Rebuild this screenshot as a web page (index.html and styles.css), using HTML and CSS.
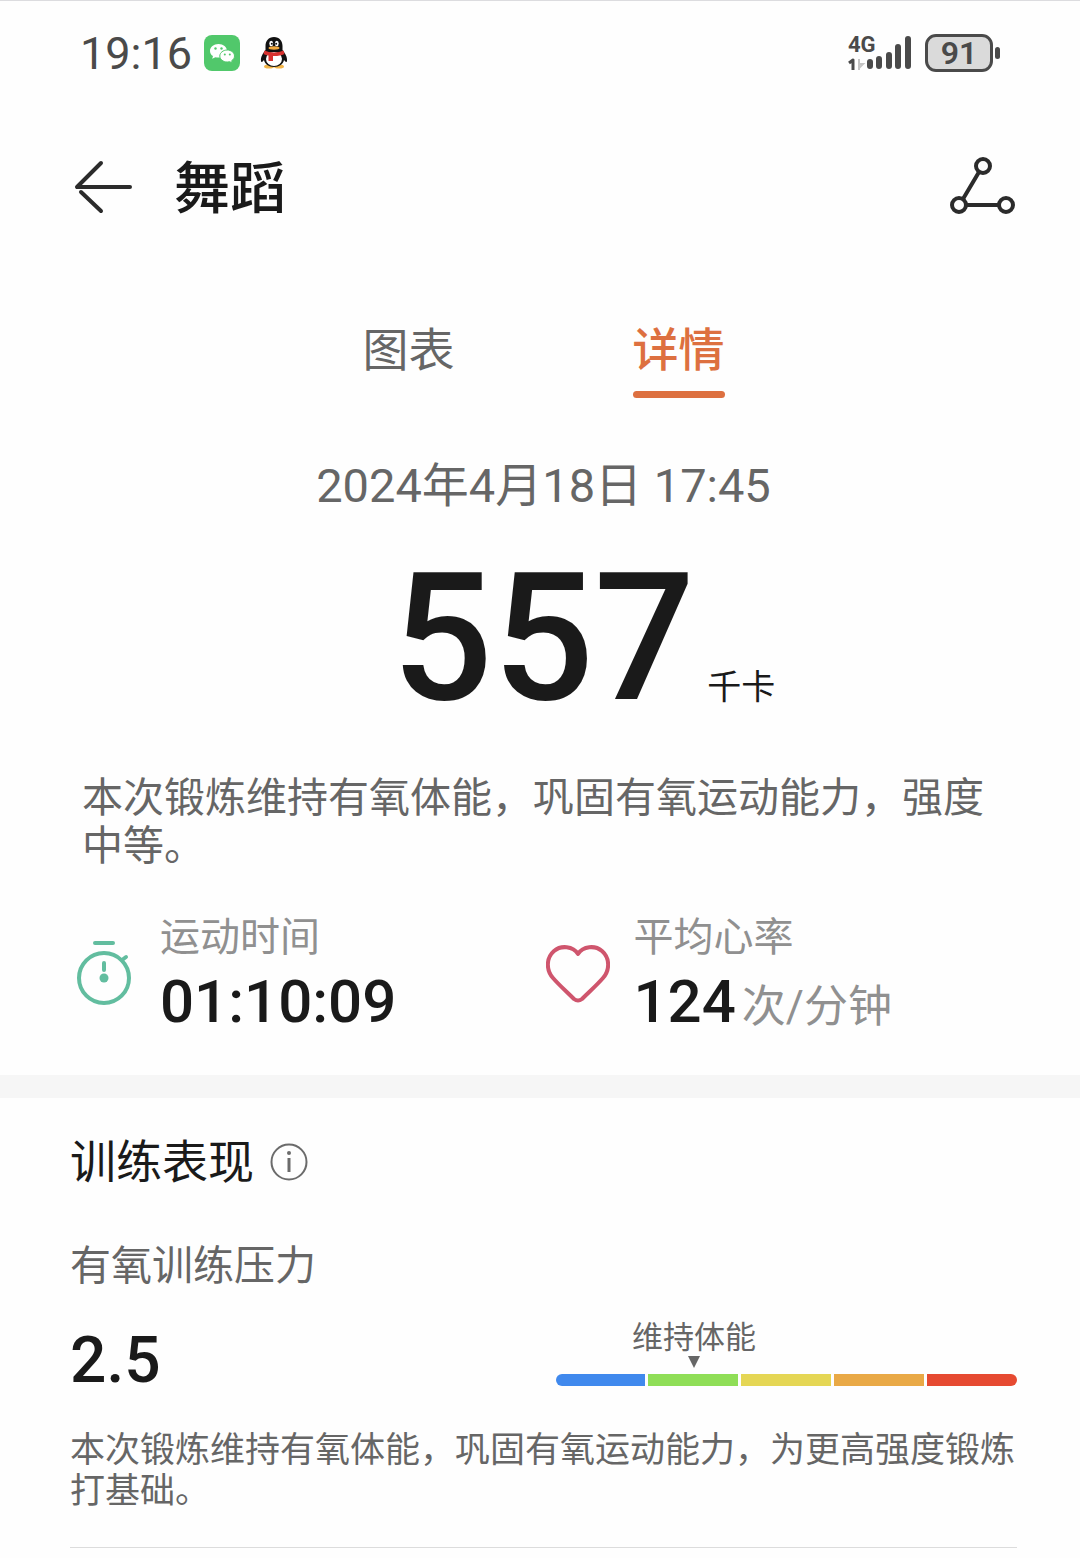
FILE: index.html
```
<!DOCTYPE html>
<html lang="zh-CN">
<head>
	<meta charset="utf-8">
	<meta name="viewport" content="width=device-width, initial-scale=1">
	<title>舞蹈</title>
	<link rel="stylesheet" href="styles.css">
</head>
<body>
	<div class="statusbar">
		<span class="clock">19:16</span>
		<svg class="app-icon" width="36" height="36" viewBox="0 0 36 36" aria-hidden="true">
			<rect width="36" height="36" rx="8" fill="#51c86b"/>
			<path d="M14.500 9c-4.800 0-8.500 3-8.500 6.900 0 2.200 1.200 4 3 5.200l-.8 2.700 3.200-1.600c1 .3 2 .4 3.100.4 4.800 0 8.500-3 8.500-6.800S19.300 9 14.500 9z" fill="#fff"/>
			<path d="M23.200 15c-4 0-7.400 2.700-7.400 6s3.300 6 7.400 6c.9 0 1.700-.1 2.500-.3l2.600 1.300-.6-2.300c1.700-1.100 2.800-2.800 2.800-4.700 0-3.300-3.300-6-7.300-6z" fill="#fff" stroke="#51c86b" stroke-width="1"/>
			<g fill="#51c86b"><circle cx="11.500" cy="13.500" r="1.200"/><circle cx="17.500" cy="13.500" r="1.200"/><circle cx="20.800" cy="19.500" r="1"/><circle cx="25.800" cy="19.500" r="1"/></g>
		</svg>
		<svg class="app-icon penguin" width="28" height="32" viewBox="0 0 28 32" aria-hidden="true">
			<ellipse cx="9" cy="29.500" rx="5" ry="2" fill="#f3b548"/>
			<ellipse cx="19" cy="29.500" rx="5" ry="2" fill="#f3b548"/>
			<path d="M14 0C8.500 0 5.500 4 5.500 9v4C3 16 .5 20 1 24c.2 1.700 1.500 1 3-1 .8 4 4.500 7 10 7s9.200-3 10-7c1.500 2 2.800 2.700 3 1 .5-4-2-8-4.500-11V9c0-5-3-9-8.500-9z" fill="#111"/>
			<ellipse cx="14" cy="22" rx="8" ry="7" fill="#fff"/>
			<ellipse cx="11.200" cy="6.500" rx="1.900" ry="2.700" fill="#fff"/>
			<ellipse cx="16.800" cy="6.500" rx="1.900" ry="2.700" fill="#fff"/>
			<circle cx="11.800" cy="6.800" r="1" fill="#111"/><circle cx="16.200" cy="6.800" r="1" fill="#111"/>
			<ellipse cx="14" cy="11" rx="5.500" ry="1.700" fill="#f3a93c"/>
			<path d="M4.500 13.500c5 2.600 14 2.600 19 0l1 3.500c-3.500 1.600-7.500 2.200-11.500 2v5H8.500v-5.500c-1.700-.3-3.500-.8-5-1.500z" fill="#d8322f"/>
		</svg>
		<svg class="signal" width="66" height="54" viewBox="-1 -8 66 54" role="img" aria-label="4G">
			<text class="signal-text" x="0" y="18">4G</text>
			<path d="M1 29l4-3v10" fill="none" stroke="#4a4a4a" stroke-width="3" stroke-linejoin="round"/>
			<path d="M11 25v11M11 34l4-4h-4" fill="none" stroke="#c4c4c4" stroke-width="2"/>
			<g stroke="#4a4a4a" stroke-width="6" stroke-linecap="round">
				<path d="M22 28v4M31 25v7M41 21v11M50 13v19M60 5v27"/>
			</g>
		</svg>
		<span class="battery">91</span>
	</div>

	<header class="appbar">
		<button class="icon-button" type="button" aria-label="返回">
			<svg width="60" height="54" viewBox="0 0 60 54" fill="none" stroke="#2b2b2b" stroke-width="4" stroke-linecap="round" stroke-linejoin="round">
				<path d="M29 3L5 27H58M9 32l20 19"/>
			</svg>
		</button>
		<h1 class="title">舞蹈</h1>
		<button class="icon-button share" type="button" aria-label="分享">
			<svg width="68" height="60" viewBox="0 0 68 60" fill="none" stroke="#2b2b2b" stroke-width="4">
				<circle cx="34" cy="9" r="7"/><circle cx="10" cy="48" r="7"/><circle cx="57" cy="48" r="7"/>
				<path d="M30 15L14 42M17 48h33"/>
			</svg>
		</button>
	</header>

	<main>
		<section class="summary">
			<nav class="tabs">
				<a class="tab" href="#chart">图表</a>
				<a class="tab active" href="#detail" aria-current="page">详情</a>
			</nav>
			<p class="date">2024年4月18日 17:45</p>
			<p class="energy"><span class="energy-value">557</span><span class="energy-unit">千卡</span></p>
			<p class="comment">本次锻炼维持有氧体能，巩固有氧运动能力，强度中等。</p>
			<div class="stats">
				<div class="stat">
					<svg class="stat-icon" width="64" height="66" viewBox="0 0 64 66" fill="none" stroke="#62bd9f" stroke-width="4" stroke-linecap="round" aria-hidden="true">
						<circle cx="32" cy="38" r="25"/>
						<path d="M23 3h18M50 20l4-3M32 23v7"/>
						<circle cx="32" cy="38" r="4.500" fill="#62bd9f" stroke="none"/>
					</svg>
					<div>
						<p class="stat-label">运动时间</p>
						<p class="stat-value">01:10:09</p>
					</div>
				</div>
				<div class="stat">
					<svg class="stat-icon" width="64" height="66" viewBox="0 0 64 66" fill="none" stroke="#cf556d" stroke-width="4" stroke-linejoin="round" aria-hidden="true">
						<path d="M32 14C27 6 15 5 8 11C0 18 0 30 7 38C13 45 21 52 28 59Q32 62 36 59C43 52 51 45 57 38C64 30 64 18 56 11C49 5 37 6 32 14z"/>
					</svg>
					<div>
						<p class="stat-label">平均心率</p>
						<p class="stat-value">124<span class="stat-unit">次/分钟</span></p>
					</div>
				</div>
			</div>
		</section>

		<section class="training">
			<div class="section-head">
				<h2 class="section-title">训练表现</h2>
				<button class="icon-button" type="button" aria-label="说明">
					<svg width="38" height="38" viewBox="0 0 38 38" fill="none" stroke="#6b6b6b" stroke-width="2">
						<circle cx="19" cy="19" r="17.500"/>
						<path d="M19 15v14" stroke-width="3"/>
						<circle cx="19" cy="10" r="2" fill="#6b6b6b" stroke="none"/>
					</svg>
				</button>
			</div>
			<h3 class="metric-name">有氧训练压力</h3>
			<div class="metric">
				<span class="metric-value">2.5</span>
				<div class="gauge">
					<!-- twice as wide as the marker position, the marker is centred in it -->
					<div class="marker" style="width: 60%">
						<span>维持体能</span>
						<i class="arrow"></i>
					</div>
					<div class="scale">
						<i class="level blue"></i>
						<i class="level green"></i>
						<i class="level yellow"></i>
						<i class="level orange"></i>
						<i class="level red"></i>
					</div>
				</div>
			</div>
			<p class="advice">本次锻炼维持有氧体能，巩固有氧运动能力，为更高强度锻炼打基础。</p>
		</section>
	</main>
</body>
</html>
```
FILE: styles.css
```
* {
	box-sizing: border-box;
}
body {
	margin: 0;
	border-top: 1px solid #dcdcdf;
	background: #fefefe;
	color: #1a1a1a;
	font-family: Roboto, "Noto Sans CJK SC", sans-serif;
}
h1, h2, h3, p {
	margin: 0;
	font-weight: 400;
}
svg {
	display: block;
}

/* status bar */
.statusbar {
	display: flex;
	align-items: center;
	height: 104px;
	padding: 0 80px;
	color: #4a4a4a;
}
.clock {
	font-size: 45px;
}
.app-icon {
	margin-left: 12px;
}
.penguin {
	margin-left: 20px;
}
.signal {
	margin-left: auto;
}
.signal-text {
	fill: #4a4a4a;
	font-size: 22px;
	font-weight: 700;
}
.battery {
	position: relative;
	width: 68px;
	margin: 0 7px 0 12px;
	border: 3px solid #4a4a4a;
	border-radius: 11px;
	background: #dadada;
	font-size: 32px;
	font-weight: 600;
	line-height: 32px;
	text-align: center;
}
.battery::after {
	content: "";
	position: absolute;
	top: 10px;
	right: -10px;
	width: 5px;
	height: 12px;
	border-radius: 3px;
	background: #4a4a4a;
}

/* title bar */
.icon-button {
	padding: 0;
	border: 0;
	background: none;
	cursor: pointer;
}
.appbar {
	display: flex;
	align-items: center;
	height: 164px;
	padding: 0 63px 0 72px;
}
.title {
	margin-left: 42px;
	padding-top: 4px;
	font-size: 56px;
	font-weight: 500;
	line-height: 80px;
}
.share {
	margin-left: auto;
}

/* summary */
.summary {
	padding: 51px 63px 35px 70px;
}
.tabs {
	display: flex;
	justify-content: center;
	gap: 178px;
}
.tab {
	color: #666;
	font-size: 46px;
	line-height: 60px;
	text-decoration: none;
}
.tab::after {
	content: "";
	display: block;
	height: 7px;
	margin-top: 11px;
	border-radius: 4px;
}
.active {
	color: #dd7040;
	font-weight: 500;
}
.active::after {
	background: #dd7040;
}
.date {
	margin-top: 58px;
	color: #666;
	font-size: 47px;
	line-height: 60px;
	text-align: center;
}
.energy {
	display: flex;
	align-items: baseline;
	justify-content: center;
	gap: 12px;
	margin-top: 42px;
	padding-left: 80px;
}
.energy-value {
	font-size: 178px;
	font-weight: 500;
	line-height: 160px;
}
.energy-unit {
	font-size: 34px;
	line-height: 40px;
}
.comment {
	margin-top: 56px;
	padding: 0 12px;
	color: #666;
	font-size: 41px;
	line-height: 48px;
}
.stats {
	display: grid;
	grid-template-columns: 1fr 1fr;
	margin-top: 42px;
}
.stat {
	display: flex;
	align-items: center;
	gap: 24px;
	padding-left: 2px;
}
.stat-icon {
	margin-bottom: 6px;
}
.stat-label {
	color: #909090;
	font-size: 40px;
	line-height: 52px;
}
.stat-value {
	font-size: 60px;
	font-weight: 500;
	line-height: 76px;
}
.stat-unit {
	margin-left: 6px;
	color: #909090;
	font-size: 44px;
	font-weight: 400;
	line-height: 40px;
}

/* training performance */
.training {
	border-top: 23px solid #f6f6f6;
	margin-bottom: 9px;
	padding: 34px 0 0 70px;
}
.section-head {
	display: flex;
	align-items: center;
	gap: 16px;
}
.section-title {
	font-size: 46px;
	line-height: 60px;
}
.metric-name {
	margin-top: 48px;
	color: #666;
	font-size: 41px;
	line-height: 52px;
}
.metric {
	display: grid;
	grid-template-columns: 1fr 1fr;
	align-items: end;
	margin: 28px 63px 0 0;
}
.metric-value {
	font-size: 64px;
	font-weight: 500;
	line-height: 74px;
}
.gauge {
	padding: 0 0 12px 12px;
}
.marker {
	display: flex;
	flex-direction: column;
	align-items: center;
	color: #666;
	font-size: 31px;
	line-height: 36px;
}
.arrow {
	border: 6px solid transparent;
	border-top: 12px solid #666;
	border-bottom: 0;
}
.scale {
	display: grid;
	grid-template-columns: repeat(5, 1fr);
	gap: 3px;
	overflow: hidden;
	height: 12px;
	margin-top: 6px;
	border-radius: 6px;
}
.blue {
	background: #4089ed;
}
.green {
	background: #8fde57;
}
.yellow {
	background: #e5d654;
}
.orange {
	background: #e9a946;
}
.red {
	background: #e64a31;
}
.advice {
	margin: 32px 63px 0 0;
	padding-bottom: 35px;
	border-bottom: 1px solid #dcdcdc;
	color: #666;
	font-size: 35px;
	line-height: 41px;
}
```
